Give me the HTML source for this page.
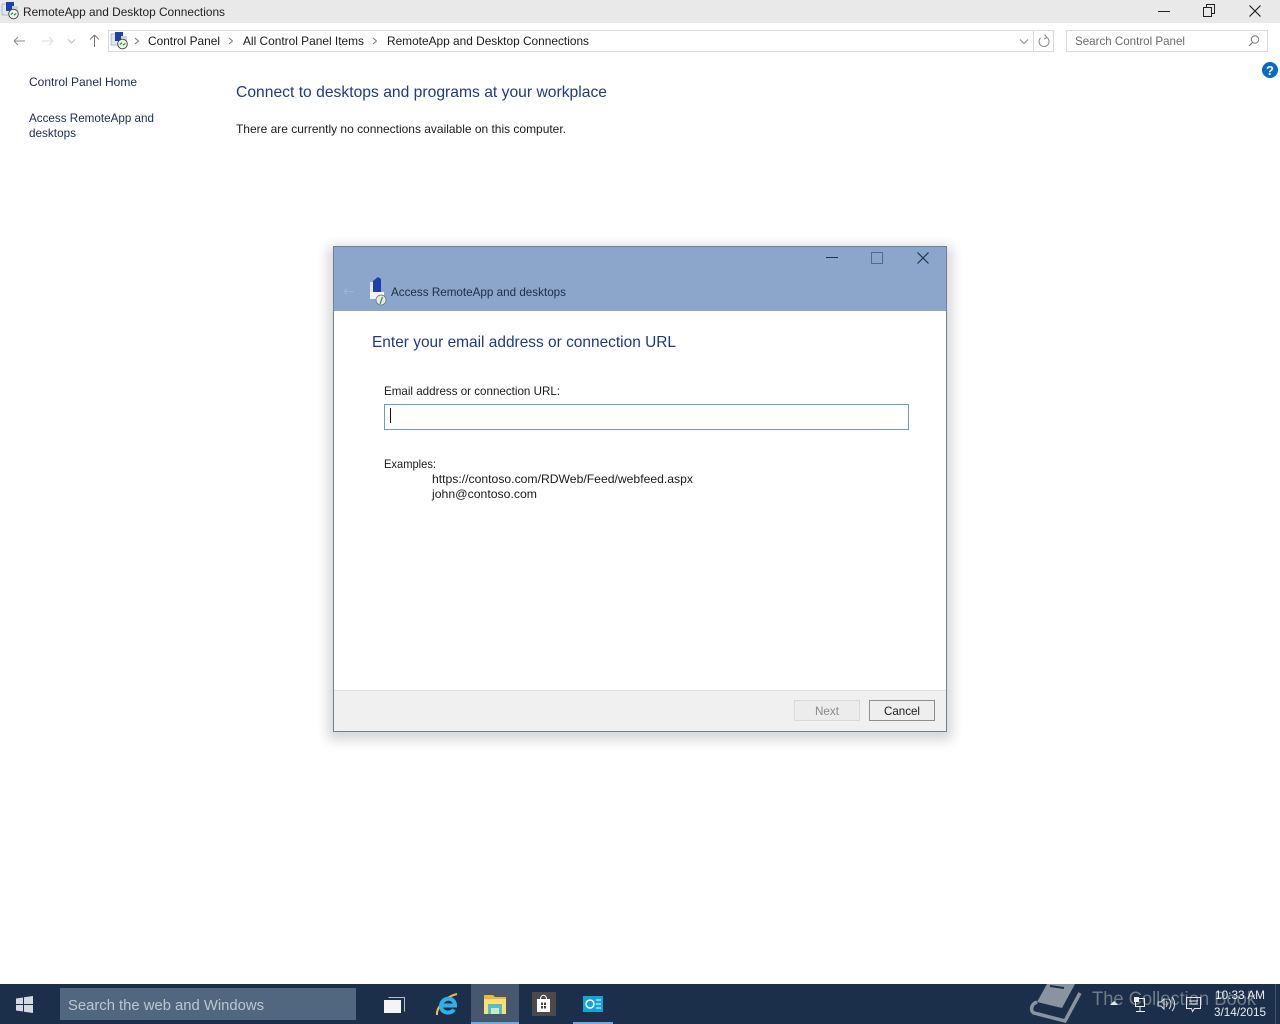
<!DOCTYPE html>
<html><head><meta charset="utf-8"><title>RemoteApp and Desktop Connections</title>
<style>
html,body{margin:0;padding:0;background:#fff;width:1280px;height:1024px;overflow:hidden}
svg{display:block}
text{font-family:"Liberation Sans",sans-serif;font-size:12px;fill:#1a1a1a}
</style></head><body>
<svg width="1280" height="1024" viewBox="0 0 1280 1024" xmlns="http://www.w3.org/2000/svg">
<defs>
<filter id="sh" x="-10%" y="-10%" width="120%" height="120%"><feGaussianBlur stdDeviation="6"/></filter>
<g id="cp">
<rect x="0" y="2" width="9" height="11" fill="#dfe6f0" stroke="#8899aa" stroke-width=".6"/>
<rect x="4" y="0" width="8" height="9" fill="#1c3fa8"/>
<rect x="10" y="4" width="6" height="7" fill="#c9d3df"/>
<circle cx="11.500" cy="12" r="4.800" fill="#e9f3e6" stroke="#444" stroke-width=".9"/>
<path d="M8.800 12.500l2.200-1.600M14.200 11.500l-2.200 1.600" stroke="#1f9a2a" stroke-width="1.300"/>
</g>
</defs>
<rect width="1280" height="23" fill="#e9e9e9"/>
<use href="#cp" x="2" y="2"/>
<text x="23" y="16" textLength="202" lengthAdjust="spacingAndGlyphs" style="fill:#222">RemoteApp and Desktop Connections</text>
<path d="M1158 11.500h12" stroke="#222" stroke-width="1"/>
<path d="M1203.500 7.500h8v9h-8zM1206.500 7.500v-3h8v9h-3" fill="none" stroke="#222"/>
<path d="M1249.500 5.500l11 11M1260.500 5.500l-11 11" stroke="#222" stroke-width="1.200"/>

<path d="M14 41h11M14 41l4-4M14 41l4 4" fill="none" stroke="#8a8a8a" stroke-width="1"/>
<path d="M42 41h11M53 41l-4-4M53 41l-4 4" fill="none" stroke="#dcdcdc" stroke-width="1"/>
<path d="M68 39.500l3.500 3.500 3.500-3.500" fill="none" stroke="#bbb"/>
<path d="M94.500 47V35M94.500 35l-4.500 4.500M94.500 35l4.500 4.500" fill="none" stroke="#777" stroke-width="1"/>

<rect x="108.500" y="30.500" width="945" height="21" fill="#fff" stroke="#dadada"/>
<path d="M1033.500 31v20" stroke="#dadada"/>
<use href="#cp" x="111" y="32"/>
<path d="M135 38l3.500 3-3.500 3M229 38l3.500 3-3.500 3M373 38l3.500 3-3.500 3" fill="none" stroke="#777"/>
<text x="148" y="45" textLength="72" lengthAdjust="spacingAndGlyphs">Control Panel</text>
<text x="243" y="45" textLength="121" lengthAdjust="spacingAndGlyphs">All Control Panel Items</text>
<text x="387" y="45" textLength="202" lengthAdjust="spacingAndGlyphs">RemoteApp and Desktop Connections</text>
<path d="M1020 39.500l4 4 4-4" fill="none" stroke="#888"/>
<path d="M1047 37.500a5 5 0 1 1-6.500 .500M1044.500 34.500l2.500 3-3 1.500" fill="none" stroke="#888"/>
<rect x="1066.500" y="30.500" width="201" height="21" fill="#fff" stroke="#dadada"/>
<text x="1075" y="45" textLength="110" lengthAdjust="spacingAndGlyphs" style="fill:#6a6a6a">Search Control Panel</text>
<circle cx="1255" cy="39.500" r="3.700" fill="none" stroke="#777"/>
<path d="M1252.500 42.500l-3.500 3.500" stroke="#777" stroke-width="1.200"/>

<circle cx="1270" cy="70" r="8" fill="#0a69c0"/>
<text x="1270" y="75" text-anchor="middle" style="font-size:13px;font-weight:bold;fill:#fff">?</text>

<text x="29" y="86" textLength="108" lengthAdjust="spacingAndGlyphs" style="fill:#1a2b55">Control Panel Home</text>
<text x="29" y="122" textLength="125" lengthAdjust="spacingAndGlyphs" style="fill:#1a2b55">Access RemoteApp and</text>
<text x="29" y="137" textLength="47" lengthAdjust="spacingAndGlyphs" style="fill:#1a2b55">desktops</text>
<text x="236" y="97" textLength="371" lengthAdjust="spacingAndGlyphs" style="font-size:16px;fill:#1c3a8c">Connect to desktops and programs at your workplace</text>
<text x="236" y="133" textLength="330" lengthAdjust="spacingAndGlyphs">There are currently no connections available on this computer.</text>

<rect x="328" y="246" width="624" height="494" fill="#000" opacity=".16" filter="url(#sh)"/>
<rect x="333.500" y="246.500" width="613" height="485" fill="#fff" stroke="#6d7f92"/>
<rect x="334" y="247" width="612" height="64" fill="#8ba5cb"/>
<path d="M826 257.500h12" stroke="#1f3350" stroke-width="1"/>
<rect x="871.500" y="252.500" width="11" height="11" fill="none" stroke="#4f6b94"/>
<path d="M917.500 252.500l11 11M928.500 252.500l-11 11" stroke="#22344f" stroke-width="1.200"/>
<path d="M344 291.500h10M344 291.500l3-3M344 291.500l3 3" fill="none" stroke="#9fb3d0"/>
<rect x="370" y="282" width="9" height="16" fill="#dfe6f0"/>
<path d="M373 281l5-4 3 2v15l-8 2z" fill="#1c3fa8"/>
<rect x="370" y="292" width="14" height="7" fill="#f2f2f2"/>
<circle cx="381" cy="300" r="5" fill="#e8e8e8" stroke="#667" stroke-width=".7"/>
<path d="M380 304l2.500-7" stroke="#2a9a2a" stroke-width="1.200"/>
<text x="391" y="296" textLength="175" lengthAdjust="spacingAndGlyphs" style="fill:#1f2d45">Access RemoteApp and desktops</text>
<text x="372" y="347" textLength="304" lengthAdjust="spacingAndGlyphs" style="font-size:16px;fill:#1c3a8c">Enter your email address or connection URL</text>
<text x="384" y="395" textLength="176" lengthAdjust="spacingAndGlyphs">Email address or connection URL:</text>
<rect x="384.500" y="404.500" width="524" height="25" fill="#fff" stroke="#6b9ccf"/>
<path d="M390.500 408v15" stroke="#111"/>
<text x="384" y="468" textLength="52" lengthAdjust="spacingAndGlyphs">Examples:</text>
<text x="432" y="483" textLength="261" lengthAdjust="spacingAndGlyphs">https://contoso.com/RDWeb/Feed/webfeed.aspx</text>
<text x="432" y="498" textLength="105" lengthAdjust="spacingAndGlyphs">john@contoso.com</text>
<rect x="334" y="690" width="612" height="41" fill="#f0f0f0"/>
<path d="M334 690.500h612" stroke="#dfdfdf"/>
<rect x="794.500" y="700.500" width="65" height="20" fill="#ececec" stroke="#d9d9d9"/>
<text x="827" y="715" text-anchor="middle" textLength="24" lengthAdjust="spacingAndGlyphs" style="fill:#8a8a8a">Next</text>
<rect x="869.500" y="700.500" width="65" height="20" fill="#eeeeee" stroke="#8f8f8f"/>
<text x="902" y="715" text-anchor="middle" textLength="36" lengthAdjust="spacingAndGlyphs">Cancel</text>

<rect y="984" width="1280" height="40" fill="#1c2f4a"/>
<path d="M16 998.500l7-1v6.500h-7zM24 997.300l9-1.300V1004h-9zM16 1005h7v6.500l-7-1zM24 1005h9v8l-9-1.300z" fill="#d5dae0"/>
<rect x="60" y="988" width="296" height="32" fill="#51667f"/>
<text x="68" y="1010" textLength="196" lengthAdjust="spacingAndGlyphs" style="font-size:15px;fill:#bcc6d1">Search the web and Windows</text>
<path d="M388.500 997.500h16v14" fill="none" stroke="#b8bec6" stroke-width="1"/>
<rect x="384" y="1000" width="17" height="13" fill="#f4f4f4"/>

<path d="M437 1015c-1-8 10-19 20-21" fill="none" stroke="#f1bd3a" stroke-width="2"/>
<path d="M441 1005.500h14c0-9-13-9-14 0c-.500 8 10 9 13 4" fill="none" stroke="#2fb0ea" stroke-width="4"/>

<rect x="471" y="984" width="48" height="40" fill="#45586f"/>
<rect x="471" y="1022" width="48" height="2" fill="#7aa7dc"/>
<path d="M484 995h9l2 2h11v3h-22z" fill="#f2b53c"/>
<rect x="484" y="999" width="22" height="15" fill="#fde16f"/>
<rect x="488" y="1004" width="14" height="10" fill="#4fc0d4"/>
<rect x="491" y="1008" width="8" height="6" fill="#cfe8c0"/>

<rect x="532" y="992" width="24" height="24" fill="#4a4a4a"/>
<rect x="537" y="999" width="13" height="13" fill="#fff"/>
<path d="M540.500 999c0-5 6-5 6 0" fill="none" stroke="#fff"/>
<path d="M541 1002.500h2v2.500h-2zM544 1002.500h2v2.500h-2zM541 1006h2v2.500h-2zM544 1006h2v2.500h-2z" fill="#444"/>
<rect x="583" y="996" width="20" height="16" fill="#11a5e0"/>
<circle cx="590" cy="1004" r="4" fill="none" stroke="#fff" stroke-width="1.500"/>
<path d="M596 1000h5M596 1004h5M596 1008h5" stroke="#fff"/>
<rect x="573" y="1022" width="40" height="2" fill="#7aa7dc"/>

<path d="M1047 984h28l-13 24-25-6z" fill="#8a94a0"/>
<path d="M1050 986l14 2" stroke="#1c2f4a" stroke-width="2"/>
<path d="M1037 1002c-6 2-7 9-3 11l31 8 15-28" fill="none" stroke="#8a94a0" stroke-width="3.500"/>
<text x="1092" y="1005" textLength="164" lengthAdjust="spacingAndGlyphs" style="font-size:19px;fill:#6c7a8b">The Collection Book</text>
<path d="M1110 1005l4-4 4 4z" fill="#e8e8e8"/>
<rect x="1135.500" y="998.500" width="9" height="8" fill="none" stroke="#eee"/>
<path d="M1140 1007v4M1136 1011.500h9" stroke="#eee"/>
<rect x="1134" y="997" width="5" height="5" fill="#eee"/>
<path d="M1158 1002h3l3-3v10l-3-3h-3z" fill="none" stroke="#ddd"/>
<path d="M1166 1001c1.500 2 1.500 4 0 6M1169 999c2.500 3 2.500 7 0 10M1172 997c3.500 4 3.500 10 0 14" fill="none" stroke="#ddd"/>
<path d="M1186.500 997.500h14v11h-6l-2 3-1-3h-5z" fill="none" stroke="#e8e8e8"/>
<path d="M1189 1001h9M1189 1004h9" stroke="#e8e8e8"/>
<text x="1215" y="999" textLength="50" lengthAdjust="spacingAndGlyphs" style="fill:#e8ecf0">10:33 AM</text>
<text x="1214" y="1016" textLength="52" lengthAdjust="spacingAndGlyphs" style="fill:#e8ecf0">3/14/2015</text>
<path d="M1275.500 984v40" stroke="#44566d"/>
</svg>
</body></html>
